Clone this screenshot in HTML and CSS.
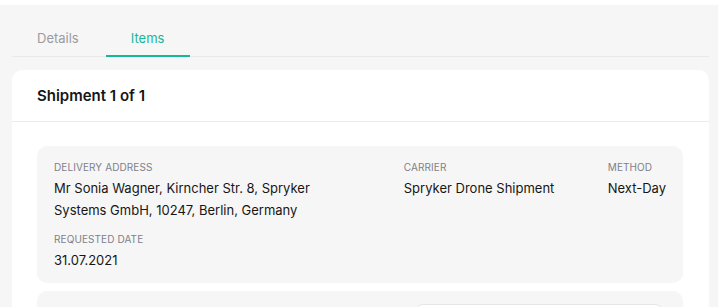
FILE: index.html
```html
<!DOCTYPE html>
<html lang="en">
<head>
    <meta charset="UTF-8">
    <meta name="viewport" content="width=device-width, initial-scale=1.0">
    <title>Order Shipments</title>
    <link rel="stylesheet" href="styles.css">
</head>
<body>

    <main class="page">
        <!-- Tabs -->
        <nav class="tabs">
            <a href="#details" class="tab">Details</a>
            <a href="#items" class="tab tab-active">Items</a>
        </nav>

        <!-- Shipment card -->
        <section class="card">
            <div class="card-header">
                <h2>Shipment 1 of 1</h2>
            </div>
            <div class="card-body">
                <div class="info-box">
                    <div class="info-col info-address">
                        <div class="field">
                            <span class="label">Delivery Address</span>
                            <p class="value">Mr Sonia Wagner, Kirncher Str. 8, Spryker Systems GmbH, 10247, Berlin, Germany</p>
                        </div>
                        <div class="field">
                            <span class="label">Requested Date</span>
                            <p class="value">31.07.2021</p>
                        </div>
                    </div>
                    <div class="info-col info-carrier">
                        <div class="field">
                            <span class="label">Carrier</span>
                            <p class="value">Spryker Drone Shipment</p>
                        </div>
                    </div>
                    <div class="info-col info-method">
                        <div class="field">
                            <span class="label">Method</span>
                            <p class="value">Next-Day</p>
                        </div>
                    </div>
                </div>

                <div class="items-box">
                    <div class="items-toolbar">
                        <div class="select-field"></div>
                    </div>
                </div>
            </div>
        </section>
    </main>

</body>
</html>
```

FILE: styles.css
```css
/* Base */
body {
    font-family: "Inter", "Liberation Sans", sans-serif;
    margin: 0;
    padding: 0;
    background-color: #fff;
    color: #161616;
}

.page {
    margin-top: 5px;
    background-color: #f6f6f6;
    padding: 0 9px 40px 12px;
    min-height: 400px;
}

/* Tabs */
.tabs {
    display: flex;
    border-bottom: 1px solid #e9e9e9;
    padding-top: 17px;
}

.tab {
    display: block;
    padding: 7px 25px 8px;
    font-size: 13px;
    line-height: 18px;
    color: #9b9b9f;
    text-decoration: none;
    margin-bottom: -1px;
    border-bottom: 2px solid transparent;
}

.tab-active {
    margin-left: 2px;
    padding: 7px 26px 8px 25px;
    color: #17b897;
    border-bottom-color: #17b897;
}

/* Card */
.card {
    margin-top: 13px;
    background-color: #fff;
    border-radius: 10px;
}

.card-header {
    height: 51px;
    display: flex;
    align-items: center;
    padding: 0 25px;
    border-bottom: 1px solid #ececec;
}

.card-header h2 {
    margin: 0;
    font-size: 15px;
    font-weight: 600;
    color: #161616;
}

.card-body {
    padding: 24px 26px 25px 25px;
}

/* Shipment info */
.info-box {
    display: grid;
    grid-template-columns: 1fr 180px auto;
    column-gap: 24px;
    background-color: #f6f6f6;
    border-radius: 10px;
    padding: 14px 17px 12px;
}

.info-address .value {
    max-width: 270px;
}

.field {
    margin-bottom: 11px;
}

.field:last-child {
    margin-bottom: 0;
}

.label {
    display: block;
    font-size: 10px;
    line-height: 14px;
    text-transform: uppercase;
    color: #80808a;
    letter-spacing: 0.1px;
}

.value {
    margin: 3px 0 0;
    font-size: 13px;
    line-height: 22px;
    color: #161616;
}

/* Items */
.items-box {
    margin-top: 8px;
    background-color: #f6f6f6;
    border-radius: 10px;
    padding: 13px 20px 20px;
    height: 120px;
}

.items-toolbar {
    display: flex;
    justify-content: flex-end;
}

.select-field {
    width: 246px;
    height: 36px;
    background-color: #fff;
    border: 1px solid #e6e6e6;
    border-radius: 8px;
}
```
